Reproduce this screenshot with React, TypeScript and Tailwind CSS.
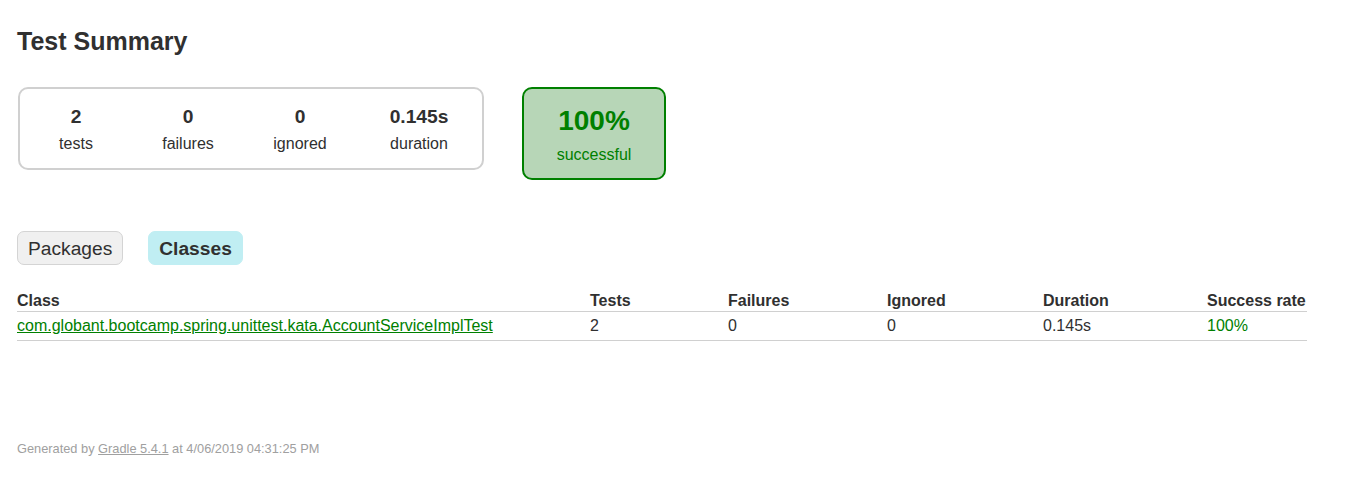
import React from "react";

const font = { fontFamily: '"Liberation Sans", Arial, Helvetica, sans-serif' };

function InfoBox({ value, label, w }: { value: string; label: string; w: string }) {
  return (
    <div className={`${w} pt-[17px] pb-[15px] text-center`}>
      <div className="text-[19.2px] leading-[22px] font-bold mb-[7px]">{value}</div>
      <div className="text-[16px] leading-[18px]">{label}</div>
    </div>
  );
}

export default function App() {
  const rows = [
    {
      name: "com.globant.bootcamp.spring.unittest.kata.AccountServiceImplTest",
      tests: "2",
      failures: "0",
      ignored: "0",
      duration: "0.145s",
      rate: "100%",
    },
  ];
  return (
    <div className="min-h-[478px] bg-white text-[#303030] px-[17px] pt-[27px]" style={font}>
      <h1 className="text-[25px] leading-[29px] font-bold">Test Summary</h1>

      <div className="flex items-start mt-[31px]">
        <div className="ml-px flex border-2 border-[#d0d0d0] rounded-[10px]">
          <InfoBox value="2" label="tests" w="w-[112px]" />
          <InfoBox value="0" label="failures" w="w-[112px]" />
          <InfoBox value="0" label="ignored" w="w-[112px]" />
          <InfoBox value="0.145s" label="duration" w="w-[126px]" />
        </div>
        <div className="ml-[38px] w-[144px] border-2 border-[#008000] bg-[#b7d6b7] rounded-[10px] pt-[16px] pb-[14px] text-center text-[#008000]">
          <div className="text-[28px] leading-[32px] font-bold mb-[9px]">100%</div>
          <div className="text-[16px] leading-[18px]">successful</div>
        </div>
      </div>

      <ul className="flex gap-[25px] mt-[51px]">
        <li className="px-[10px] pt-[6px] pb-[4px] border border-[#d4d4d4] bg-[#f0f0f0] rounded-[7px] text-[19.2px] leading-[22px]">
          Packages
        </li>
        <li className="px-[10px] pt-[6px] pb-[4px] border border-[#c0eef3] bg-[#c0eef3] rounded-[7px] text-[19.2px] leading-[22px] font-bold">
          Classes
        </li>
      </ul>

      <table className="table-fixed w-[1290px] border-collapse mt-[27px] text-[16px] leading-[18px]">
        <colgroup>
          <col className="w-[573px]" />
          <col className="w-[138px]" />
          <col className="w-[159px]" />
          <col className="w-[156px]" />
          <col className="w-[164px]" />
          <col className="w-[100px]" />
        </colgroup>
        <thead>
          <tr className="border-b border-[#d0d0d0]">
            {["Class", "Tests", "Failures", "Ignored", "Duration", "Success rate"].map((h) => (
              <th key={h} className="text-left font-bold p-0 pb-[1px] whitespace-nowrap">
                {h}
              </th>
            ))}
          </tr>
        </thead>
        <tbody>
          {rows.map((r) => (
            <tr key={r.name} className="border-b border-[#d0d0d0]">
              <td className="p-0 pt-[5px] pb-[5px] whitespace-nowrap">
                <a href="#" className="text-[#008000] underline">
                  {r.name}
                </a>
              </td>
              <td className="p-0 pt-[5px] pb-[5px]">{r.tests}</td>
              <td className="p-0 pt-[5px] pb-[5px]">{r.failures}</td>
              <td className="p-0 pt-[5px] pb-[5px]">{r.ignored}</td>
              <td className="p-0 pt-[5px] pb-[5px]">{r.duration}</td>
              <td className="p-0 pt-[5px] pb-[5px] text-[#008000]">{r.rate}</td>
            </tr>
          ))}
        </tbody>
      </table>

      <div className="mt-[100px] text-[12.8px] leading-[15px] text-[#a0a0a0]">
        Generated by{" "}
        <a href="#" className="underline text-[#a0a0a0]">
          Gradle 5.4.1
        </a>{" "}
        at 4/06/2019 04:31:25 PM
      </div>
    </div>
  );
}
